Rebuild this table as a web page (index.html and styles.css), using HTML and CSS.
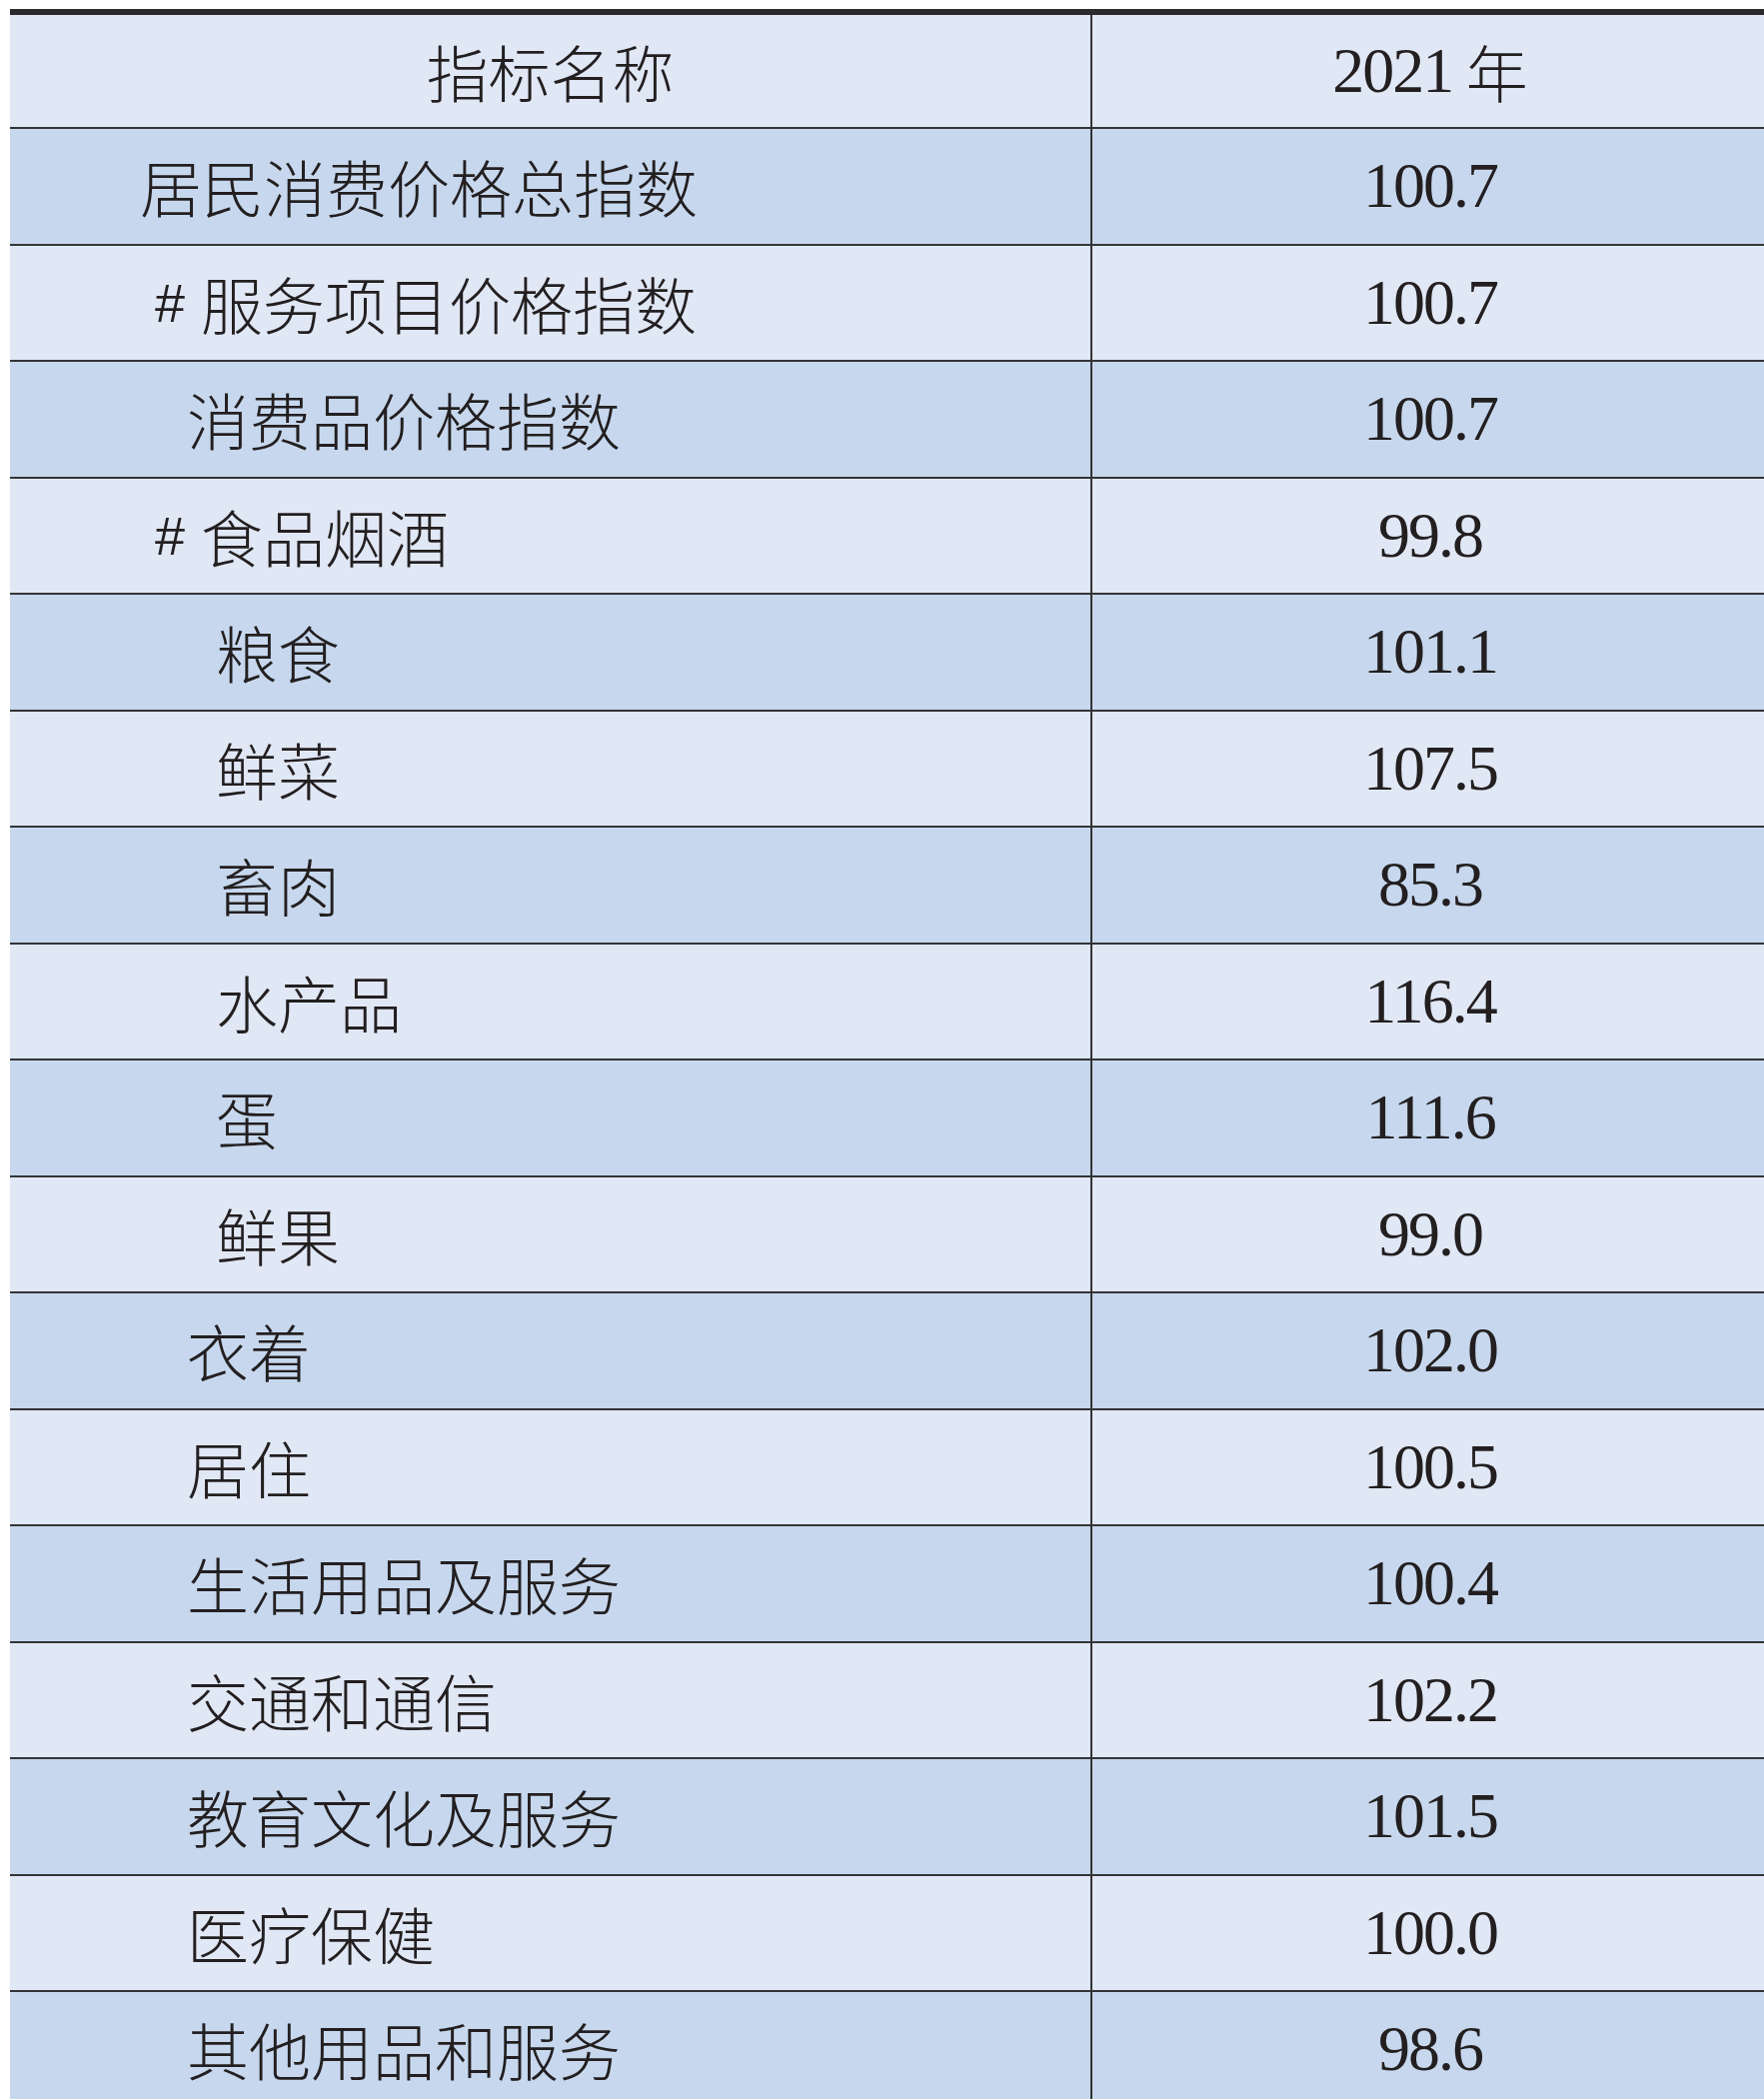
FILE: index.html
```html
<!DOCTYPE html>
<html lang="zh-CN">
<head>
<meta charset="utf-8">
<title>居民消费价格指数</title>
<link rel="stylesheet" href="styles.css">
</head>
<body>
<div class="page">
  <div class="table">
    <div class="row head light">
      <div class="name center">指标名称</div>
      <div class="val">2021<span class="cjk"> 年</span></div>
    </div>
    <div class="row dark"><div class="name l0">居民消费价格总指数</div><div class="val">100.7</div></div>
    <div class="row light"><div class="name lh"><span class="hash">#</span>服务项目价格指数</div><div class="val">100.7</div></div>
    <div class="row dark"><div class="name l1">消费品价格指数</div><div class="val">100.7</div></div>
    <div class="row light"><div class="name lh"><span class="hash">#</span>食品烟酒</div><div class="val">99.8</div></div>
    <div class="row dark"><div class="name l2">粮食</div><div class="val">101.1</div></div>
    <div class="row light"><div class="name l2">鲜菜</div><div class="val">107.5</div></div>
    <div class="row dark"><div class="name l2">畜肉</div><div class="val">85.3</div></div>
    <div class="row light"><div class="name l2">水产品</div><div class="val">116.4</div></div>
    <div class="row dark"><div class="name l2">蛋</div><div class="val">111.6</div></div>
    <div class="row light"><div class="name l2">鲜果</div><div class="val">99.0</div></div>
    <div class="row dark"><div class="name l1">衣着</div><div class="val">102.0</div></div>
    <div class="row light"><div class="name l1">居住</div><div class="val">100.5</div></div>
    <div class="row dark"><div class="name l1">生活用品及服务</div><div class="val">100.4</div></div>
    <div class="row light"><div class="name l1">交通和通信</div><div class="val">102.2</div></div>
    <div class="row dark"><div class="name l1">教育文化及服务</div><div class="val">101.5</div></div>
    <div class="row light"><div class="name l1">医疗保健</div><div class="val">100.0</div></div>
    <div class="row dark"><div class="name l1">其他用品和服务</div><div class="val">98.6</div></div>
  </div>
</div>
</body>
</html>
```
FILE: styles.css
```css
html, body {
  margin: 0;
  padding: 0;
  background: #ffffff;
}
.page {
  padding: 9px 0 0 10px;
  height: 2091px;
  overflow: hidden;
}
.table {
  border-top: 6px solid #2a2a2c;
  color: #231f20;
}
.row {
  display: flex;
  box-sizing: border-box;
  height: 116.5px;
  border-bottom: 2px solid #343436;
}
.row.head {
  height: 114px;
}
.light { background: #e0e7f5; }
.dark { background: #c7d8ee; }
.name {
  box-sizing: border-box;
  width: 1083px;
  flex: none;
  border-right: 2px solid #333335;
  display: flex;
  align-items: center;
  font-family: "Noto Sans CJK SC", "Noto Sans CJK JP", sans-serif;
  font-weight: 300;
  font-size: 62px;
  line-height: 1;
  white-space: nowrap;
}
.name.center { justify-content: center; }
.l0 { padding-left: 130px; }
.l1 { padding-left: 177px; }
.l2 { padding-left: 206px; }
.lh { padding-left: 145px; }
.hash {
  display: inline-block;
  width: 46px;
  font-family: "Liberation Sans", "DejaVu Sans", sans-serif;
  font-weight: 400;
  font-size: 54px;
}
.val {
  flex: 1;
  display: flex;
  align-items: center;
  justify-content: center;
  padding-left: 4px;
  font-family: "Liberation Serif", "Times New Roman", serif;
  font-size: 64px;
  letter-spacing: -2px;
  line-height: 1;
  white-space: pre;
}
.cjk {
  font-family: "Noto Sans CJK SC", "Noto Sans CJK JP", sans-serif;
  font-weight: 300;
  font-size: 62px;
  letter-spacing: 0;
}
```
